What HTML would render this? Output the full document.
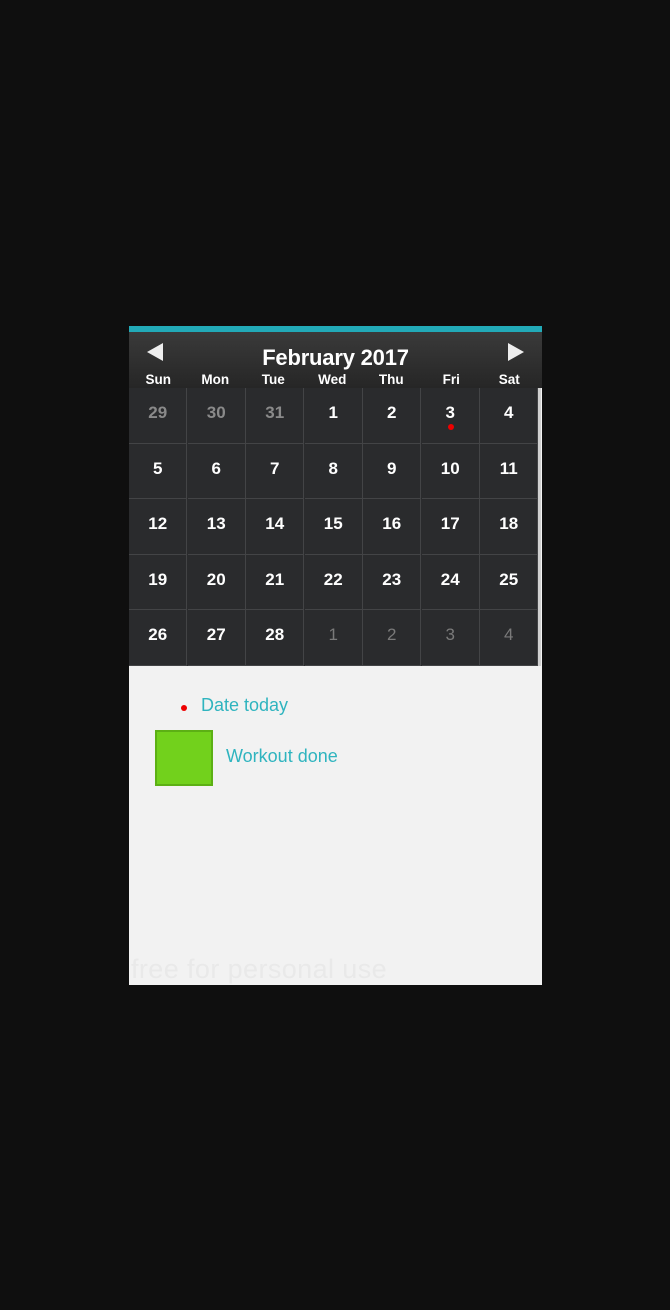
<!DOCTYPE html>
<html><head><style>
body{margin:0;background:#0f0f0f;width:670px;height:1310px;position:relative;font-family:"Liberation Sans",Arial,sans-serif;overflow:hidden}
#p{position:absolute;left:129px;top:326px;width:413px;height:659px;background:#f2f2f2}
#bar{position:absolute;left:0;top:0;width:413px;height:6px;background:#22aab8}
#hd{position:absolute;left:0;top:6px;width:413px;height:56px;background:linear-gradient(#3a3a3a,#262626)}
#title{position:absolute;left:0;width:413px;top:13px;text-align:center;color:#fff;font-weight:bold;font-size:22px;letter-spacing:-0.2px}
.dw{position:absolute;top:40px;width:58.6px;text-align:center;color:#fff;font-weight:bold;font-size:13.5px}
#grid{position:absolute;left:0;top:62px;width:409px;height:278px;background:#2a2b2d;border-right:3px solid #d0d0d0}
.c{position:absolute;width:58.4px;height:55.6px;box-sizing:border-box;border-right:1px solid #434446;border-bottom:1px solid #434446;color:#fff;font-weight:bold;font-size:17px;text-align:center;line-height:50px}
.g{color:#8a8a8a}
.o{color:#7a7a7a;font-weight:normal}
</style></head><body>
<div id="p">
<div id="bar"></div>
<div id="hd">
<svg style="position:absolute;left:18px;top:11px" width="16" height="18"><polygon points="16,0 16,18 0,9" fill="#eee"/></svg>
<svg style="position:absolute;left:379px;top:11px" width="16" height="18"><polygon points="0,0 0,18 16,9" fill="#eee"/></svg>
<div id="title">February 2017</div>
<div class="dw" style="left:0">Sun</div><div class="dw" style="left:57px">Mon</div><div class="dw" style="left:115px">Tue</div><div class="dw" style="left:174px">Wed</div><div class="dw" style="left:233px">Thu</div><div class="dw" style="left:293px">Fri</div><div class="dw" style="left:351px">Sat</div>
</div>
<div id="grid">
<script>
var d=[[29,30,31,1,2,3,4],[5,6,7,8,9,10,11],[12,13,14,15,16,17,18],[19,20,21,22,23,24,25],[26,27,28,1,2,3,4]];
for(var r=0;r<5;r++)for(var c=0;c<7;c++){var cls='c';if(r==0&&c<3)cls+=' g';if(r==4&&c>2)cls+=' o';
document.write('<div class="'+cls+'" style="left:'+(c*58.5)+'px;top:'+(r*55.6)+'px">'+d[r][c]+(r==0&&c==5?'<span style="position:absolute;left:26px;top:36px;width:6px;height:6px;border-radius:3px;background:#e00"></span>':'')+'</div>');}
</script>
</div>
<div style="position:absolute;left:52px;top:379px;width:6px;height:6px;border-radius:3px;background:#e00"></div>
<div style="position:absolute;left:72px;top:369px;color:#2fb4bf;font-size:18px">Date today</div>
<div style="position:absolute;left:26px;top:404px;width:54px;height:52px;background:#72d11c;border:2px solid #5cb014"></div>
<div style="position:absolute;left:97px;top:420px;color:#2fb4bf;font-size:18px">Workout done</div>
<div style="position:absolute;left:2px;top:628px;color:#e9e9e9;font-size:27px;letter-spacing:0.4px">free for personal use</div>
</div>
</body></html>
